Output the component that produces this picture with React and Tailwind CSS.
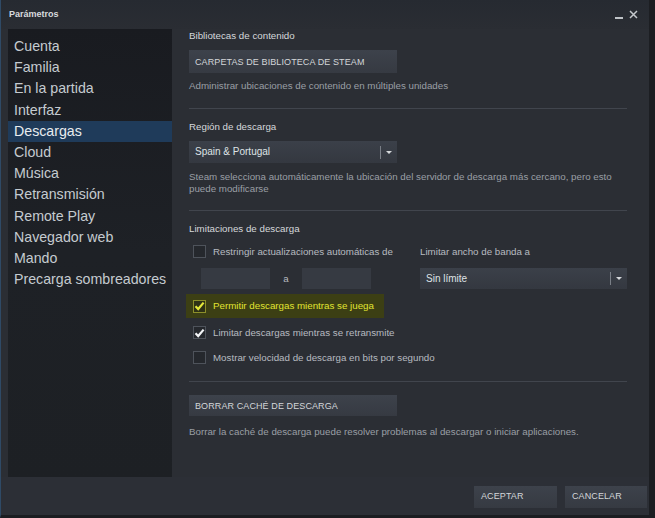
import React from "react";

const menu = [
  "Cuenta",
  "Familia",
  "En la partida",
  "Interfaz",
  "Descargas",
  "Cloud",
  "Música",
  "Retransmisión",
  "Remote Play",
  "Navegador web",
  "Mando",
  "Precarga sombreadores",
];

function Check({ checked, accent }) {
  return (
    <div
      className={`w-[13px] h-[13px] shrink-0 flex items-center justify-center border ${
        accent ? "border-[#8c8f2a] bg-[#2e3116]" : "border-[#4e535b] bg-[#25282d]"
      }`}
    >
      {checked && (
        <svg width="11" height="10" viewBox="0 0 11 10">
          <path
            d="M1.5 5.2 L4.2 8 L9.6 1.6"
            fill="none"
            stroke={accent ? "#e4e83a" : "#f2f4f6"}
            strokeWidth="2.2"
          />
        </svg>
      )}
    </div>
  );
}

function Dropdown({ label, className }) {
  return (
    <div className={`flex items-center bg-gradient-to-b from-[#3b4049] to-[#343840] ${className}`}>
      <span className="flex-1 pl-[6px] text-[10px] text-[#dfe3e6]">{label}</span>
      <div className="w-px h-[13px] bg-[#7a7f87]" />
      <div className="w-[16px] flex justify-center">
        <div className="w-0 h-0 border-l-[3px] border-r-[3px] border-t-[3px] border-l-transparent border-r-transparent border-t-[#d6d9dc]" />
      </div>
    </div>
  );
}

function Btn({ children, className }) {
  return (
    <div
      className={`flex items-center pl-[6px] bg-gradient-to-b from-[#3d424b] to-[#363a42] text-[9px] text-[#d3d6d9] tracking-[0.1px] ${className}`}
    >
      {children}
    </div>
  );
}

export default function App() {
  return (
    <div
      className="w-[655px] h-[518px] flex flex-col bg-[#2b2e34] border-l border-[#2f4a66] border-r-[6px] border-r-[#1c1e22] border-b-[3px] border-b-[#1b1d21] overflow-hidden"
      style={{ fontFamily: '"Liberation Sans", Arial, sans-serif' }}
    >
      {/* barra de título */}
      <div className="h-[29px] shrink-0 flex items-center pl-[8px] pr-[8px] bg-gradient-to-b from-[#262a31] to-[#2a2d33]">
        <span className="text-[9px] font-bold text-[#d8dbde]">Parámetros</span>
        <div className="ml-auto flex items-center gap-[6px] pr-[3px]">
          <div className="w-[8px] h-[2px] bg-[#bfc3c7] mt-[6px]" />
          <svg width="9" height="9" viewBox="0 0 9 9">
            <path d="M1 1 L8 8 M8 1 L1 8" stroke="#c4c8cc" strokeWidth="1.5" />
          </svg>
        </div>
      </div>

      <div className="flex flex-1 min-h-0">
        {/* menú lateral */}
        <div className="w-[164px] ml-[7px] h-full shrink-0 pt-[7px] bg-gradient-to-b from-[#191b20] via-[#1e2126] to-[#1d2024]">
          {menu.map((item) => (
            <div
              key={item}
              className={`h-[21.2px] leading-[21.2px] pl-[6px] text-[14.2px] whitespace-nowrap ${
                item === "Descargas" ? "bg-[#1f3b5a] text-[#e8ecef]" : "text-[#c5cbd0]"
              }`}
            >
              {item}
            </div>
          ))}
        </div>

        {/* contenido */}
        <div className="flex-1 flex flex-col pl-[17px] pr-[16px] pt-[1px] text-[9.75px] leading-[12px] text-[#c4c8cc]">
          <div className="text-[#d5d8db]">Bibliotecas de contenido</div>
          <Btn className="mt-[8px] w-[208px] h-[23px]">CARPETAS DE BIBLIOTECA DE STEAM</Btn>
          <div className="mt-[7px] text-[#9a9fa5]">
            Administrar ubicaciones de contenido en múltiples unidades
          </div>
          <div className="mt-[16px] mr-[6px] h-px bg-[#41454d]" />

          <div className="mt-[12px] text-[#d5d8db]">Región de descarga</div>
          <Dropdown label="Spain & Portugal" className="mt-[8px] w-[208px] h-[22px]" />
          <div className="mt-[8px] text-[#9a9fa5] pr-[10px]">
            Steam selecciona automáticamente la ubicación del servidor de descarga más cercano, pero esto puede modificarse
          </div>
          <div className="mt-[15px] mr-[6px] h-px bg-[#41454d]" />

          <div className="mt-[12px] text-[#d5d8db]">Limitaciones de descarga</div>
          <div className="flex mt-[10px]">
            <div className="w-[231px] flex flex-col">
              <div className="flex items-center gap-[7px] pl-[4px] h-[13px]">
                <Check />
                <span className="text-[#b7bbc0]">Restringir actualizaciones automáticas de</span>
              </div>
              <div className="flex items-center mt-[10px] pl-[12px] h-[21px]">
                <div className="w-[69px] h-[21px] bg-[#363a42]" />
                <span className="w-[32px] text-center text-[#b7bbc0]">a</span>
                <div className="w-[69px] h-[21px] bg-[#363a42]" />
              </div>
            </div>
            <div className="flex flex-col">
              <div className="h-[13px] flex items-center text-[#b7bbc0]">Limitar ancho de banda a</div>
              <Dropdown label="Sin límite" className="mt-[10px] w-[207px] h-[21px]" />
            </div>
          </div>

          <div className="mt-[5px] -ml-[3px] w-[198px] h-[24px] flex items-center gap-[7px] pl-[7px] bg-[#3c3f14]">
            <Check checked accent />
            <span className="text-[#e0e431]">Permitir descargas mientras se juega</span>
          </div>
          <div className="mt-[8px] flex items-center gap-[7px] pl-[4px] h-[13px]">
            <Check checked />
            <span className="text-[#b7bbc0]">Limitar descargas mientras se retransmite</span>
          </div>
          <div className="mt-[12px] flex items-center gap-[7px] pl-[4px] h-[13px]">
            <Check />
            <span className="text-[#b7bbc0]">Mostrar velocidad de descarga en bits por segundo</span>
          </div>
          <div className="mt-[17px] mr-[6px] h-px bg-[#41454d]" />

          <Btn className="mt-[13px] w-[208px] h-[21px]">BORRAR CACHÉ DE DESCARGA</Btn>
          <div className="mt-[10px] text-[#9a9fa5]">
            Borrar la caché de descarga puede resolver problemas al descargar o iniciar aplicaciones.
          </div>
        </div>
      </div>

      {/* botones inferiores */}
      <div className="h-[38px] shrink-0 flex items-start justify-end gap-[8px] pt-[9px] pr-[2px] bg-[#2c2f36]">
        <Btn className="w-[83px] h-[22px] pl-[7px]">ACEPTAR</Btn>
        <Btn className="w-[82px] h-[22px] pl-[7px]">CANCELAR</Btn>
      </div>
    </div>
  );
}
